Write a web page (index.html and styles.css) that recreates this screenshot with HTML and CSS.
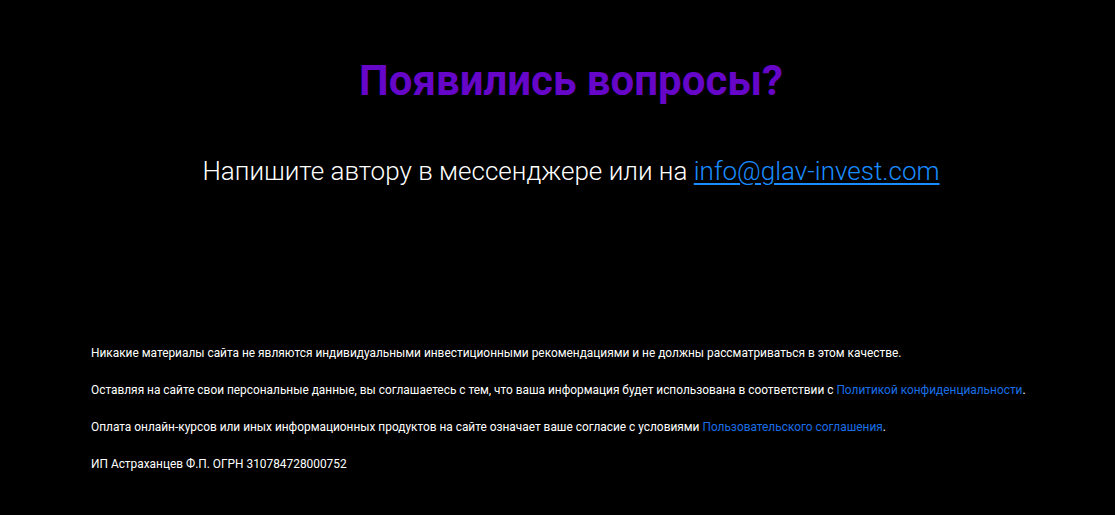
FILE: index.html
```html
<!DOCTYPE html>
<html lang="ru">
<head>
<meta charset="utf-8">
<link rel="stylesheet" href="styles.css">
</head>
<body>
<section class="contact">
  <h2 class="title">Появились вопросы?</h2>
  <p class="lead">Напишите автору в мессенджере или на <a href="#" class="mail">info@glav-invest.com</a></p>
</section>
<footer class="footer">
  <p>Никакие материалы сайта не являются индивидуальными инвестиционными рекомендациями и не должны рассматриваться в этом качестве.</p>
  <p>Оставляя на сайте свои персональные данные, вы соглашаетесь с тем, что ваша информация будет использована в соответствии с <a href="#">Политикой конфиденциальности</a>.</p>
  <p>Оплата онлайн-курсов или иных информационных продуктов на сайте означает ваше согласие с условиями <a href="#">Пользовательского соглашения</a>.</p>
  <p>ИП Астраханцев Ф.П. ОГРН 310784728000752</p>
</footer>
</body>
</html>
```
FILE: styles.css
```css
html, body {
  margin: 0;
  background: #000;
  color: #fff;
  font-family: Roboto, "Noto Sans", sans-serif;
}
.contact {
  text-align: center;
  padding: 55px 0 0 27px;
  height: 282px;
  box-sizing: border-box;
}
.title {
  margin: 0;
  font-size: 42px;
  font-weight: 700;
  line-height: 52px;
  color: #6506c8;
}
.lead {
  margin: 48px 0 0;
  font-size: 26px;
  font-weight: 300;
  line-height: 32px;
  color: #fff;
}
.mail {
  color: #1a8cff;
  text-decoration: underline;
  text-decoration-thickness: 2px;
  text-underline-offset: 3px;
}
.footer {
  padding: 64px 0 0 91px;
  font-size: 11.88px;
  line-height: 14px;
}
.footer p {
  margin: 0 0 23px;
}
.footer a {
  color: #1a6ee6;
  text-decoration: none;
}
```
